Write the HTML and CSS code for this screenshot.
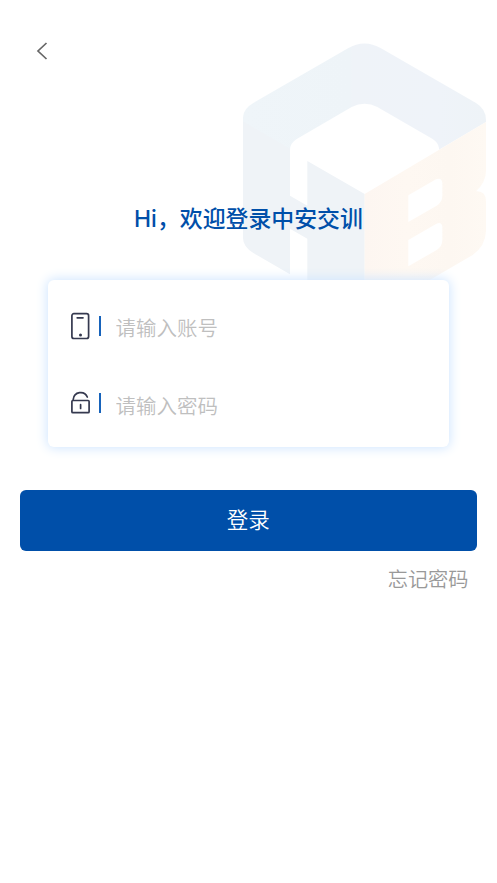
FILE: index.html
```html
<!DOCTYPE html>
<html lang="zh-CN">
<head>
<meta charset="utf-8">
<meta name="viewport" content="width=device-width, initial-scale=1">
<title>登录</title>
<link rel="stylesheet" href="styles.css">
</head>
<body>
<main class="page">
  <svg class="emblem" viewBox="0 0 801 810" aria-hidden="true">
    <defs>
      <linearGradient id="roof" x1="0" x2="1" y1="0" y2="0">
        <stop offset="0" stop-color="#eff5f9"/>
        <stop offset=".44" stop-color="#eef4f8"/>
        <stop offset=".45" stop-color="#eff3f8"/>
        <stop offset=".8" stop-color="#eff3f9"/>
        <stop offset="1" stop-color="#eef3f7"/>
      </linearGradient>
      <linearGradient id="side" x1="0" x2="1" y1="0" y2="0">
        <stop offset="0" stop-color="#fdf6f1"/>
        <stop offset=".35" stop-color="#fef8f2"/>
        <stop offset=".7" stop-color="#fdf7f1"/>
        <stop offset="1" stop-color="#fef9f3"/>
      </linearGradient>
    </defs>
    <path fill="url(#roof)" d="M39 276V262Q40 236 70 219L354 55Q403 26 453 55L738 219Q768 237 768 270V276L627 359V354Q625 338 608 327L442 231Q404 211 365 231L199 328Q180 340 180 360Z"/>
    <path fill="#eff3f7" d="M39 274L180 356V497L232 527V393L404 492V810H232V626L180 596V733L70 669Q39 650 39 624Z"/>
    <path fill="url(#side)" fill-rule="evenodd" d="M404 492L768 276V423Q768 456 738 484Q768 482 768 514V604Q766 649 728 675L496 810H404ZM535 496V576L620 527Q637 516 637 497V458Q634 441 618 448ZM535 630V709L620 660Q637 649 637 630V590Q634 573 618 582Z"/>
  </svg>

  <header class="topbar">
    <button class="back" aria-label="返回">
      <svg viewBox="0 0 12 18"><path d="M10.5 1L2 9L10.5 17"/></svg>
    </button>
  </header>

  <h1 class="title">Hi，欢迎登录中安交训</h1>

  <form class="form">
    <div class="card">
      <label class="field">
        <svg class="icon" viewBox="0 0 20 28">
          <rect x="1.9" y="1.7" width="16.7" height="24.8" rx="2"/>
          <path d="M7.2 5.8H13"/>
          <circle class="dot" cx="10.5" cy="23" r="1.5"/>
        </svg>
        <span class="bar"></span>
        <input class="input" type="text" placeholder="请输入账号">
      </label>
      <label class="field">
        <svg class="icon" viewBox="0 0 20 28">
          <rect x="1.9" y="10.5" width="17.2" height="12.2" rx="1"/>
          <path d="M3.2 9.5C4 1.5 14.4 .2 17.3 7M10.6 14.7V18.5"/>
        </svg>
        <span class="bar"></span>
        <input class="input" type="password" placeholder="请输入密码">
      </label>
    </div>
    <button class="submit" type="button">登录</button>
    <a class="forgot">忘记密码</a>
  </form>
</main>
</body>
</html>
```
FILE: styles.css
```css
* { box-sizing: border-box; }

body {
  margin: 0;
  background: #fff;
  font-family: "Noto Sans CJK SC", sans-serif;
}

.page {
  position: relative;
  height: 883px;
  overflow: hidden;
}

.emblem {
  position: absolute;
  z-index: -1;
  left: 230px;
  top: 30px;
  width: 267px;
  height: 270px;
}

.topbar {
  height: 101px;
  padding: 42px 0 0 36px;
}

.back {
  display: block;
  width: 12px;
  height: 18px;
  padding: 0;
  border: 0;
  background: none;
}

.back svg {
  display: block;
  fill: none;
  stroke: #666;
  stroke-width: 1.7;
}

.title {
  margin: 102px 0 0;
  height: 32px;
  line-height: 32px;
  text-align: center;
  font-family: Inter, "Noto Sans CJK SC", sans-serif;
  font-size: 22.9px;
  font-weight: 500;
  color: #004fa9;
}

.title::first-line { -webkit-text-stroke: .1px #004fa9; }

.form {
  display: flex;
  flex-direction: column;
  padding: 44.5px 20.5px 0 20px;
}

.card {
  height: 167px;
  margin: 0 27.5px;
  padding: 9px 20px 0 22px;
  border-radius: 6px;
  background: #fff;
  box-shadow: 0 0 12px 1px #cfe5ff;
}

.field {
  display: flex;
  align-items: center;
  height: 77.5px;
}

.icon {
  flex: none;
  width: 20px;
  height: 28px;
  margin-top: -2px;
  overflow: visible;
  fill: none;
  stroke: #35394f;
  stroke-width: 1.7;
  stroke-linecap: round;
}

.icon .dot {
  fill: #35394f;
  stroke: none;
}

.bar {
  flex: none;
  width: 2px;
  height: 20px;
  margin: -3px 15px 0 9px;
  background: #1763bb;
}

.input {
  flex: 1;
  min-width: 0;
  height: 32px;
  padding: 0;
  border: 0;
  outline: 0;
  background: none;
  font: 350 20.5px "Noto Sans CJK SC", sans-serif;
}

.input::placeholder { color: #bfbfbf; }

.submit {
  height: 60.5px;
  margin-top: 43.5px;
  padding: 0 0 3px;
  border: 0;
  border-radius: 6px;
  background: #004fa9;
  color: #fff;
  font: 350 21.5px "Noto Sans CJK SC", sans-serif;
}

.forgot {
  align-self: flex-end;
  margin: 12.5px 8px 0 0;
  line-height: 32px;
  font-size: 20.2px;
  font-weight: 350;
  color: #999;
}
```
